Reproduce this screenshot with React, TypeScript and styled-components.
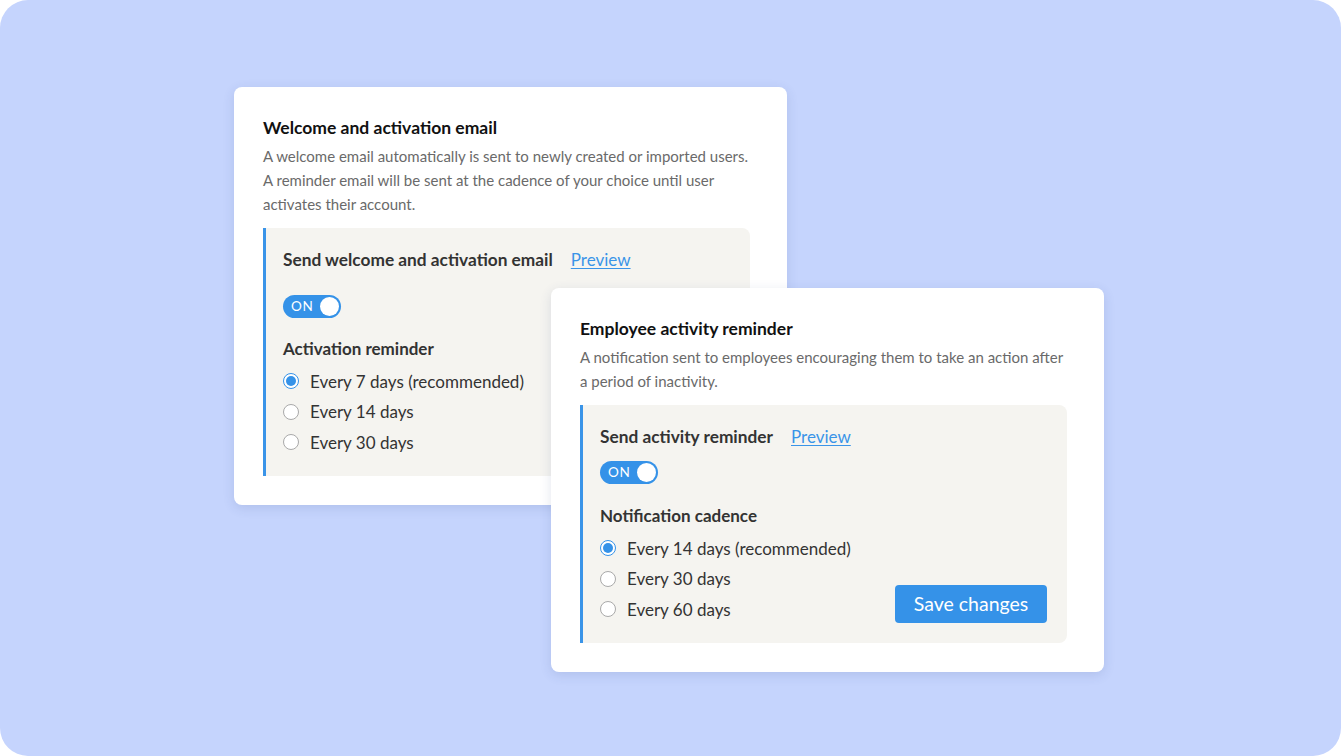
import React from "react";
import styled, { createGlobalStyle } from "styled-components";

const Global = createGlobalStyle`
  html, body { margin: 0; padding: 0; background: #ffffff; }
  body { font-family: Lato, "Open Sans", Arial, sans-serif; -webkit-font-smoothing: antialiased; }
  * { box-sizing: border-box; }
`;

const Page = styled.div`
  width: 1341px;
  height: 756px;
  background: #c5d4fd;
  border-radius: 28px;
  overflow: hidden;
  position: relative;
`;

const Card = styled.section<{ $left: number; $top: number }>`
  position: absolute;
  left: ${(p) => p.$left}px;
  top: ${(p) => p.$top}px;
  width: 553px;
  background: #ffffff;
  border-radius: 8px;
  padding: 29px 37px 29px 29px;
  box-shadow: 0 3px 12px rgba(50, 70, 130, 0.14);
  display: flex;
  flex-direction: column;
`;

const Title = styled.h2`
  margin: 0;
  font-size: 17.5px;
  line-height: 23px;
  font-weight: 700;
  color: #111111;
`;

const Desc = styled.p`
  margin: 5px 0 0;
  font-size: 15px;
  line-height: 24px;
  color: #6a6a6a;
`;

const Panel = styled.div`
  margin-top: 12px;
  background: #f5f4f0;
  border-left: 3px solid #3a94e8;
  border-radius: 0 8px 8px 0;
  padding: 20px 20px 18px 17px;
  display: flex;
  flex-direction: column;
  position: relative;
`;

const HeadRow = styled.div`
  display: flex;
  align-items: center;
  gap: 18px;
`;

const PanelHeading = styled.h3`
  margin: 0;
  font-size: 17.3px;
  line-height: 24px;
  font-weight: 700;
  color: #333333;
`;

const PreviewLink = styled.a`
  font-size: 17px;
  line-height: 24px;
  color: #3a94e8;
  text-decoration: underline;
  text-underline-offset: 2px;
  cursor: pointer;
`;

const Toggle = styled.div<{ $gap: number }>`
  margin-top: ${(p) => p.$gap}px;
  width: 58px;
  height: 23px;
  border-radius: 12px;
  background: #3592e8;
  display: flex;
  align-items: center;
  justify-content: space-between;
  padding: 0 2px 0 8px;
`;

const ToggleText = styled.span`
  color: #ffffff;
  font-size: 13.5px;
  letter-spacing: 0.8px;
  line-height: 1;
`;

const Knob = styled.span`
  width: 19px;
  height: 19px;
  border-radius: 50%;
  background: #ffffff;
`;

const GroupHeading = styled.h4<{ $gap: number }>`
  margin: ${(p) => p.$gap}px 0 5px;
  font-size: 17px;
  line-height: 24px;
  font-weight: 700;
  color: #333333;
`;

const RadioList = styled.div`
  display: flex;
  flex-direction: column;
`;

const RadioRow = styled.label`
  display: flex;
  align-items: center;
  gap: 11px;
  height: 30.5px;
  font-size: 17px;
  color: #333333;
`;

const RadioDot = styled.span<{ $on?: boolean }>`
  width: 16px;
  height: 16px;
  border-radius: 50%;
  flex: none;
  background: #ffffff;
  border: 1px solid ${(p) => (p.$on ? "#3592e8" : "#a9a9a9")};
  display: flex;
  align-items: center;
  justify-content: center;
  &::after {
    content: "";
    width: 10px;
    height: 10px;
    border-radius: 50%;
    background: ${(p) => (p.$on ? "#3592e8" : "transparent")};
  }
`;

const SaveButton = styled.button`
  position: absolute;
  right: 20px;
  bottom: 20px;
  width: 152px;
  height: 38px;
  border: none;
  border-radius: 4px;
  background: #3592e8;
  color: #ffffff;
  font-family: Lato, "Open Sans", Arial, sans-serif;
  font-size: 19.5px;
  cursor: pointer;
`;

type Opt = { label: string; on?: boolean };

const Radios = ({ options }: { options: Opt[] }) => (
  <RadioList>
    {options.map((o) => (
      <RadioRow key={o.label}>
        <RadioDot $on={o.on} />
        {o.label}
      </RadioRow>
    ))}
  </RadioList>
);

export default function App() {
  return (
    <>
      <Global />
      <Page>
        <Card $left={234} $top={87}>
          <Title>Welcome and activation email</Title>
          <Desc>
            A welcome email automatically is sent to newly created or imported users. A reminder
            email will be sent at the cadence of your choice until user activates their account.
          </Desc>
          <Panel>
            <HeadRow>
              <PanelHeading>Send welcome and activation email</PanelHeading>
              <PreviewLink>Preview</PreviewLink>
            </HeadRow>
            <Toggle $gap={23}>
              <ToggleText>ON</ToggleText>
              <Knob />
            </Toggle>
            <GroupHeading $gap={19}>Activation reminder</GroupHeading>
            <Radios
              options={[
                { label: "Every 7 days (recommended)", on: true },
                { label: "Every 14 days" },
                { label: "Every 30 days" },
              ]}
            />
          </Panel>
        </Card>
        <Card $left={551} $top={288}>
          <Title>Employee activity reminder</Title>
          <Desc>
            A notification sent to employees encouraging them to take an action after a period of
            inactivity.
          </Desc>
          <Panel>
            <HeadRow>
              <PanelHeading>Send activity reminder</PanelHeading>
              <PreviewLink>Preview</PreviewLink>
            </HeadRow>
            <Toggle $gap={12}>
              <ToggleText>ON</ToggleText>
              <Knob />
            </Toggle>
            <GroupHeading $gap={20}>Notification cadence</GroupHeading>
            <Radios
              options={[
                { label: "Every 14 days (recommended)", on: true },
                { label: "Every 30 days" },
                { label: "Every 60 days" },
              ]}
            />
            <SaveButton>Save changes</SaveButton>
          </Panel>
        </Card>
      </Page>
    </>
  );
}
